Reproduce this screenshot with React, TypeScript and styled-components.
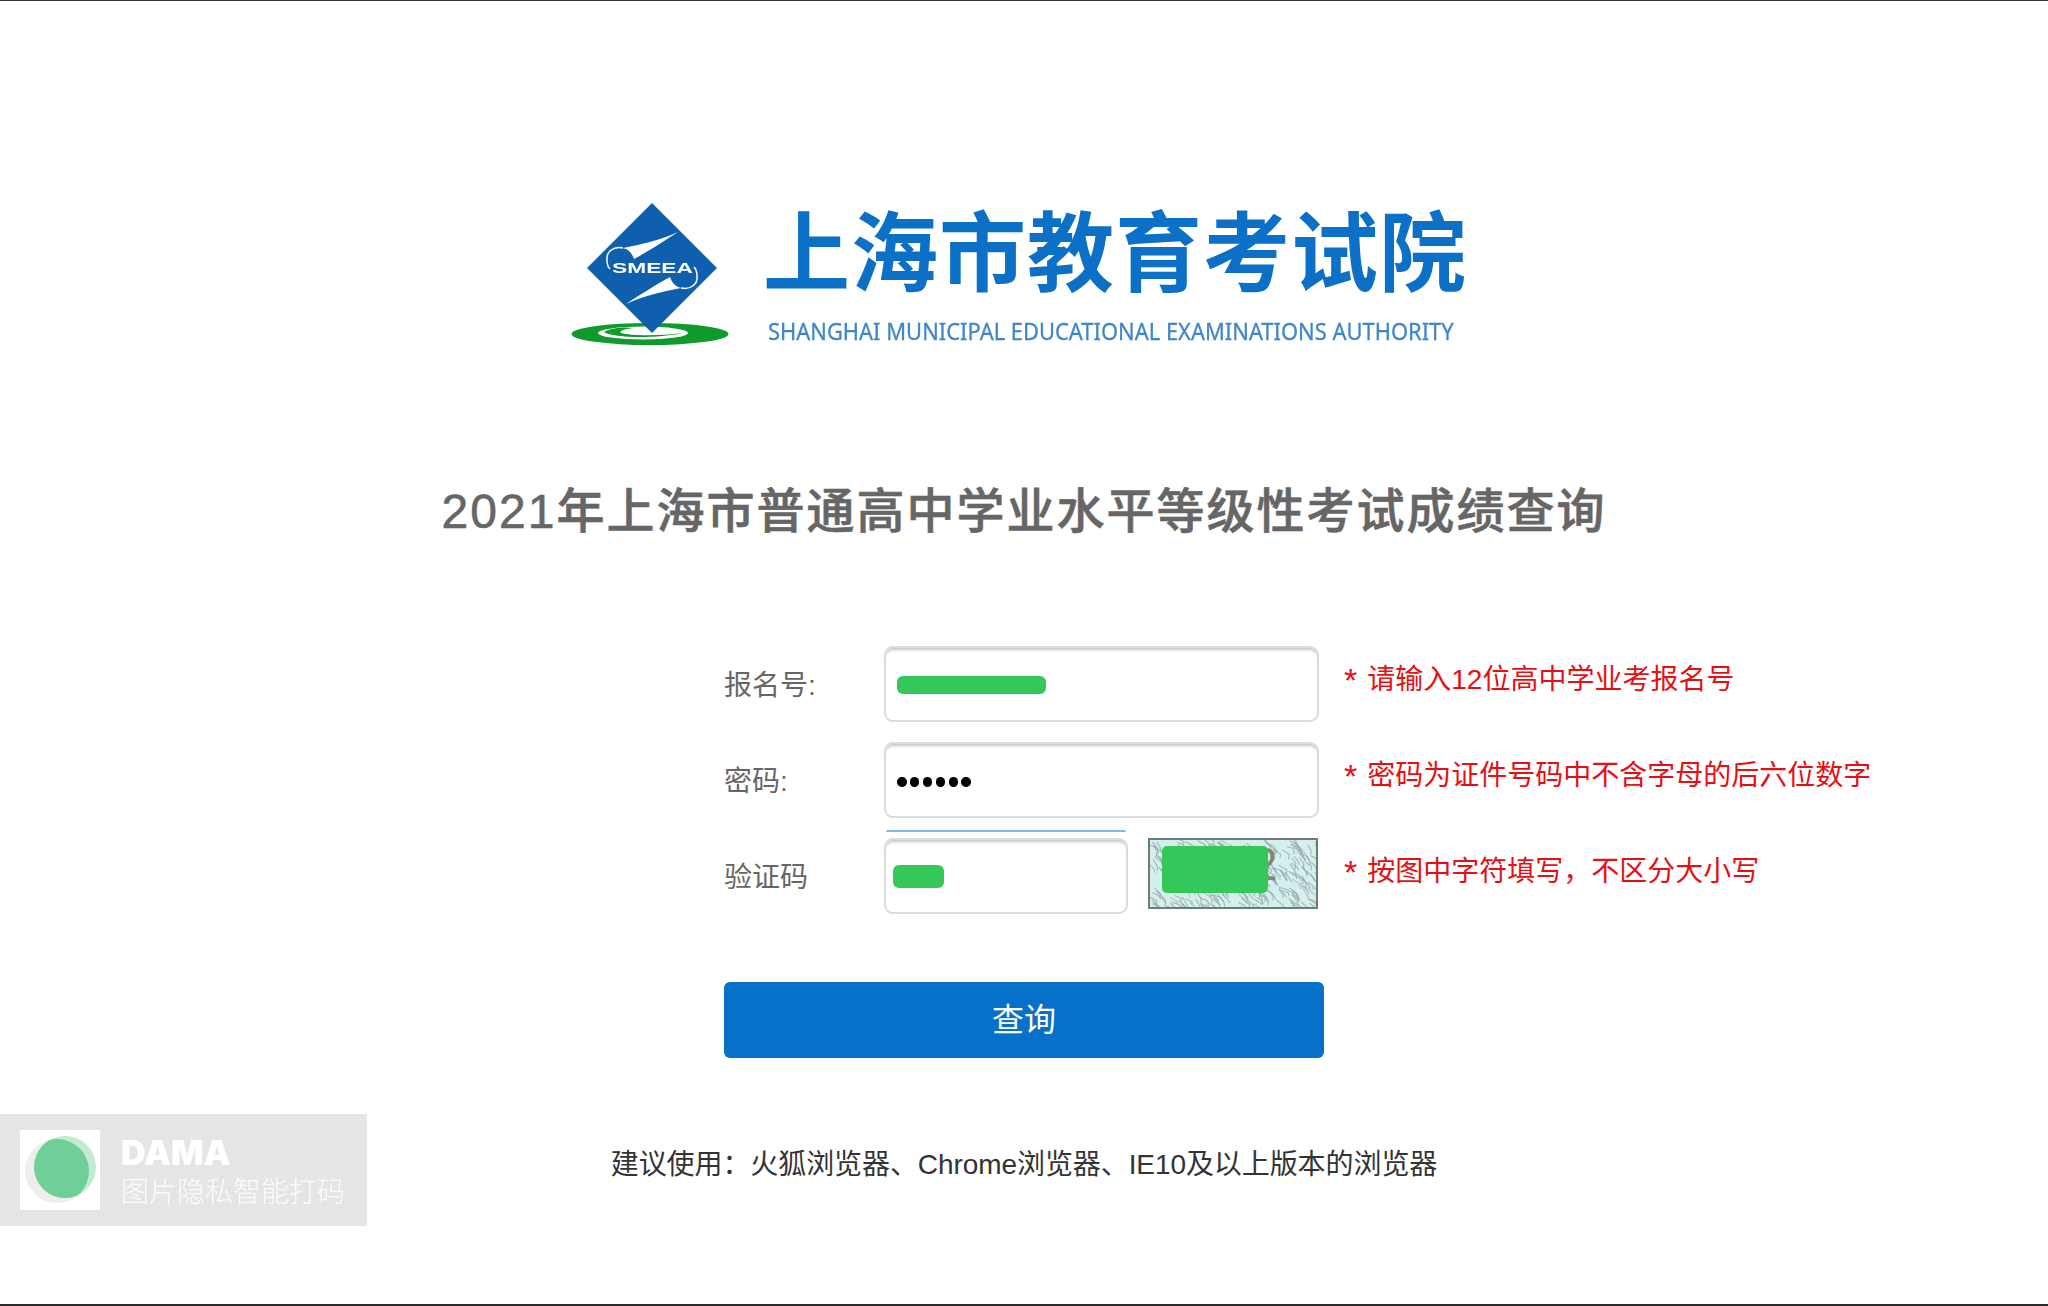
import React from "react";
import styled, { createGlobalStyle } from "styled-components";

const Global = createGlobalStyle`
  html, body { margin: 0; padding: 0; background: #fff; }
  body { font-family: "Liberation Sans", "Noto Sans CJK SC", sans-serif; }
`;

const Page = styled.div`
  position: relative;
  box-sizing: border-box;
  width: 2048px;
  height: 1306px;
  overflow: hidden;
  display: flex;
  flex-direction: column;
  align-items: center;
  border-top: 1px solid #333;
  border-bottom: 2px solid #2b2b2b;
  padding-top: 201px;
`;

const Brand = styled.div`
  display: flex;
  align-items: flex-start;
  gap: 34px;
  align-self: flex-start;
  margin-left: 571px;
  height: 144px;
`;

const BrandText = styled.div`
  display: flex;
  flex-direction: column;
  filter: blur(0.6px);
  margin-top: -3px;
`;

const BrandName = styled.div`
  font-family: "Noto Sans CJK SC", sans-serif;
  font-weight: 700;
  font-size: 87px;
  line-height: 96px;
  letter-spacing: 1px;
  color: #0b70c6;
  white-space: nowrap;
`;

const BrandEnglish = styled.div`
  font-family: "Noto Sans", sans-serif;
  font-size: 24px;
  line-height: 28px;
  margin-top: 22px;
  margin-left: 5px;
  color: #3f86cc;
  white-space: nowrap;
  transform: scaleX(0.913);
  transform-origin: left center;
  -webkit-text-stroke: 0.3px #3f86cc;
`;

const Title = styled.h1`
  margin: 136px 0 0;
  font-family: "Liberation Sans", "Noto Sans CJK SC", sans-serif;
  font-weight: 500;
  font-size: 48px;
  line-height: 60px;
  letter-spacing: 2px;
  color: #666;
  white-space: nowrap;
  -webkit-text-stroke: 0.6px #666;
`;

const Form = styled.form`
  align-self: flex-start;
  margin: 104px 0 0 724px;
  display: flex;
  flex-direction: column;
  gap: 20px;
`;

const Row = styled.div`
  display: grid;
  grid-template-columns: 160px 435px 1fr;
  align-items: center;
  height: 76px;
`;

const Label = styled.label`
  font-size: 28px;
  line-height: 40px;
  padding: 3px 0 0;
  color: #666;
`;

const Field = styled.div<{ $width?: number }>`
  position: relative;
  box-sizing: border-box;
  width: ${(p) => p.$width ?? 435}px;
  height: 76px;
  display: flex;
  align-items: center;
  padding-left: ${(p) => (p.$width ? 7 : 11)}px;
  border: 2px solid #dcdcdc;
  border-radius: 9px;
  background: #fff;
  box-shadow: inset 0 4px 3px -2px #c4c4c4;
`;

const FocusLine = styled.div`
  position: absolute;
  left: 0;
  right: 0;
  top: -10px;
  height: 2px;
  border-radius: 2px 2px 0 0;
  background: #7fb6f0;
`;

const Mask = styled.div<{ $w: number; $h: number }>`
  width: ${(p) => p.$w}px;
  height: ${(p) => p.$h}px;
  margin-top: 1px;
  border-radius: 6px;
  background: #34c759;
`;

const Dots = styled.div`
  display: flex;
  gap: 3.4px;
  margin-top: 4px;
`;

const Dot = styled.span`
  width: 9.5px;
  height: 9.5px;
  border-radius: 50%;
  background: #000;
`;

const CaptchaGroup = styled.div`
  display: flex;
  align-items: flex-start;
  gap: 20px;
`;

const Captcha = styled.div`
  position: relative;
  width: 170px;
  height: 71px;
  flex: none;
`;

const CaptchaMask = styled.div`
  position: absolute;
  left: 14px;
  top: 8px;
  width: 106px;
  height: 47px;
  border-radius: 5px;
  background: #34c759;
`;

const CaptchaImage = styled.svg`
  display: block;
  filter: blur(0.4px);
`;

const Hint = styled.div`
  padding: 0 0 8px 25px;
  font-size: 28px;
  line-height: 40px;
  color: #e60f14;
  white-space: nowrap;
`;

const Star = styled.span`
  font-size: 34px;
  line-height: 1;
  vertical-align: -3px;
  margin-right: 10px;
`;

const Submit = styled.button`
  display: block;
  width: 600px;
  height: 76px;
  margin-top: 68px;
  padding: 0 0 6px;
  border: 0;
  border-radius: 6px;
  background: #0770c8;
  color: #fff;
  font-family: "Noto Sans CJK SC", sans-serif;
  font-size: 32px;
`;

const Advice = styled.p`
  margin: 87px 0 0;
  font-size: 28px;
  line-height: 40px;
  letter-spacing: -0.08px;
  color: #333;
  white-space: nowrap;
`;

const Watermark = styled.div`
  position: absolute;
  left: 0;
  top: 1113px;
  width: 367px;
  height: 112px;
  box-sizing: border-box;
  padding: 16px 0 0 20px;
  display: flex;
  gap: 21px;
  background: #e5e5e5;
`;

const WatermarkIcon = styled.svg`
  width: 80px;
  height: 80px;
  flex: none;
`;

const WatermarkText = styled.div`
  display: flex;
  flex-direction: column;
  color: #fff;
`;

const WatermarkName = styled.div`
  font-family: "Inter", "Liberation Sans", sans-serif;
  font-weight: 900;
  font-size: 34px;
  line-height: 38px;
  margin-top: 4px;
`;

const WatermarkTag = styled.div`
  font-family: "Noto Sans CJK SC", sans-serif;
  font-weight: 300;
  font-size: 28px;
  line-height: 36px;
  white-space: nowrap;
  opacity: 0.85;
`;

const LogoBox = styled.svg`
  width: 158px;
  height: 144px;
  flex: none;
  filter: blur(0.5px);
`;

function Logo() {
  const blade = "M107 30 C90 38 72 42 52 46 C58 48 61 51 63 57 C76 50 92 40 107 30Z";
  const arc = "M52 46 C42 44 35 50 36 58 C36 62 37 65 39 67";
  return (
    <LogoBox viewBox="0 0 158 144">
      <ellipse cx="79" cy="132" rx="78.5" ry="11" fill="#0f9a2c" />
      <ellipse cx="72" cy="131" rx="45" ry="6.5" fill="#fff" />
      <path d="M33 130 C42 125 56 125 62 126 C53 127 48 129 50 131 C60 134 90 134 112 131 C90 136 44 137 33 130Z" fill="#0f9a2c" />
      <path d="M81 1 L146 66 L81 131 L16 66Z" fill="#0f5fae" />
      <g>
        <path d={blade} fill="#fff" />
        <path d={arc} fill="none" stroke="#fff" strokeWidth="1.5" />
      </g>
      <g transform="rotate(180 81 66)">
        <path d={blade} fill="#fff" />
        <path d={arc} fill="none" stroke="#fff" strokeWidth="1.5" />
      </g>
      <text x="41" y="71" textLength="81" lengthAdjust="spacingAndGlyphs" fontFamily="'Liberation Sans', sans-serif" fontWeight="700" fontSize="14.5" fill="#fff">SMEEA</text>
    </LogoBox>
  );
}

const captchaLines = (() => {
  let seed = 17;
  const next = () => {
    seed = (seed * 1103515245 + 12345) & 0x7fffffff;
    return seed / 0x7fffffff;
  };
  const out: string[] = [];
  for (let i = 0; i < 300; i++) {
    const x = next() * 170;
    const y = next() * 71;
    out.push(
      `M${x.toFixed(1)} ${y.toFixed(1)} l${(3 + next() * 5).toFixed(1)} ${(2 + next() * 5).toFixed(1)} l${(next() * 5 - 1).toFixed(1)} ${(2 + next() * 4).toFixed(1)}`
    );
  }
  return out;
})();

function CaptchaArt() {
  return (
    <CaptchaImage width="170" height="71" viewBox="0 0 170 71">
      <rect x="1" y="1" width="168" height="69" fill="#d3f0ec" />
      {captchaLines.map((d, i) => (
        <path key={i} d={d} fill="none" stroke={i % 5 === 0 ? "#b09fb4" : "#8f9ea6"} strokeWidth="1.1" opacity="0.7" />
      ))}
      <text x="104" y="42" fontFamily="'Liberation Sans', sans-serif" fontSize="46" fill="#7f8a6a">2</text>
      <rect x="1" y="1" width="168" height="69" fill="none" stroke="#6d7a78" strokeWidth="2" />
    </CaptchaImage>
  );
}

export default function App() {
  return (
    <>
      <Global />
      <Page>
        <Brand>
          <Logo />
          <BrandText>
            <BrandName>上海市教育考试院</BrandName>
            <BrandEnglish>SHANGHAI MUNICIPAL EDUCATIONAL EXAMINATIONS AUTHORITY</BrandEnglish>
          </BrandText>
        </Brand>
        <Title>2021年上海市普通高中学业水平等级性考试成绩查询</Title>
        <Form>
          <Row>
            <Label>报名号:</Label>
            <Field><Mask $w={149} $h={18} /></Field>
            <Hint><Star>*</Star>请输入12位高中学业考报名号</Hint>
          </Row>
          <Row>
            <Label>密码:</Label>
            <Field>
              <Dots>{[0, 1, 2, 3, 4, 5].map((i) => <Dot key={i} />)}</Dots>
            </Field>
            <Hint><Star>*</Star>密码为证件号码中不含字母的后六位数字</Hint>
          </Row>
          <Row>
            <Label>验证码</Label>
            <CaptchaGroup>
              <Field $width={244}>
                <FocusLine />
                <Mask $w={51} $h={23} />
              </Field>
              <Captcha>
                <CaptchaArt />
                <CaptchaMask />
              </Captcha>
            </CaptchaGroup>
            <Hint><Star>*</Star>按图中字符填写，不区分大小写</Hint>
          </Row>
        </Form>
        <Submit type="button">查询</Submit>
        <Advice>建议使用：火狐浏览器、Chrome浏览器、IE10及以上版本的浏览器</Advice>
        <Watermark>
          <WatermarkIcon viewBox="0 0 80 80">
            <defs>
              <clipPath id="dama-lens">
                <circle cx="37" cy="41" r="32" />
              </clipPath>
            </defs>
            <rect width="80" height="80" fill="#fff" />
            <circle cx="37" cy="41" r="32" fill="#eeeeee" />
            <circle cx="45" cy="37" r="31" fill="#c3ead2" />
            <circle cx="45" cy="37" r="31" fill="#70cf97" clipPath="url(#dama-lens)" />
          </WatermarkIcon>
          <WatermarkText>
            <WatermarkName>DAMA</WatermarkName>
            <WatermarkTag>图片隐私智能打码</WatermarkTag>
          </WatermarkText>
        </Watermark>
      </Page>
    </>
  );
}
